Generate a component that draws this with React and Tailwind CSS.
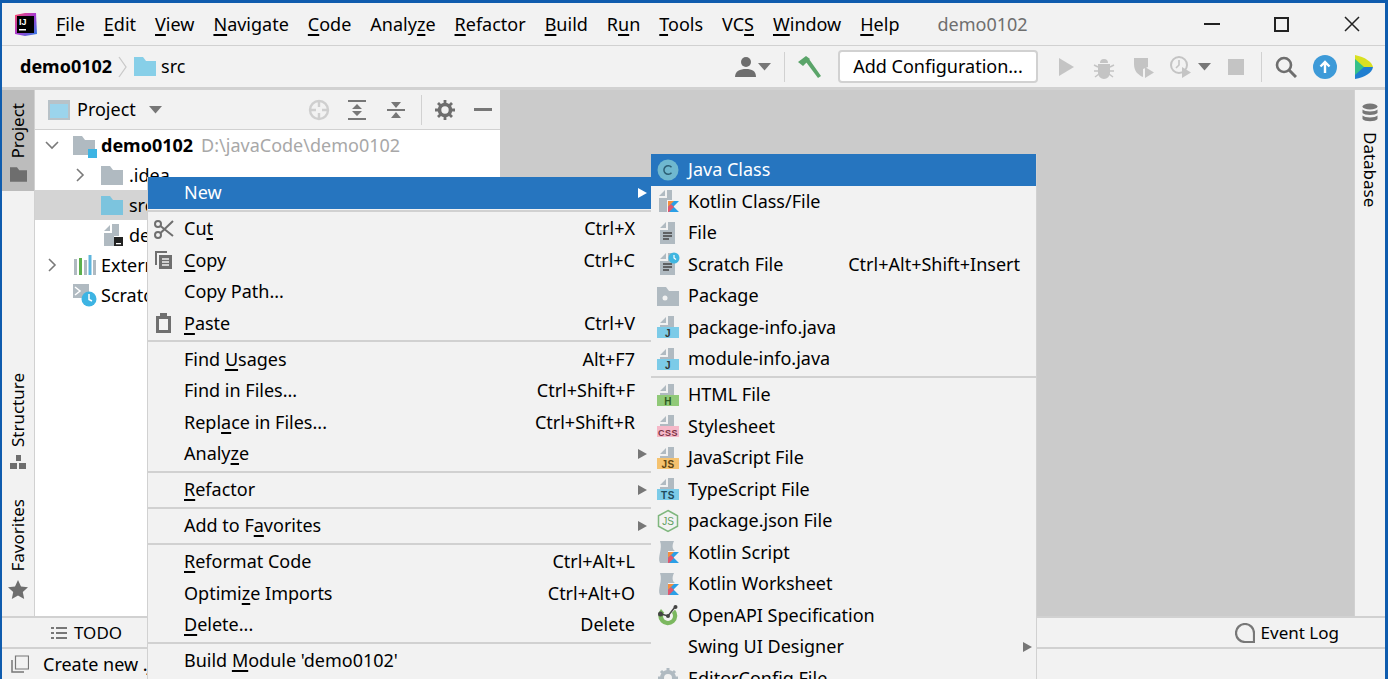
const gray = '#b0bac1';

function U({ children }) {
  return <span className="underline decoration-[1.5px] underline-offset-[3px]">{children}</span>;
}

function Svg({ w = 20, h = 20, vb, className = '', children }) {
  return (
    <svg width={w} height={h} viewBox={vb || `0 0 ${w} ${h}`} className={`shrink-0 ${className}`} aria-hidden="true">
      {children}
    </svg>
  );
}

function Folder({ color = gray, w = 22, h = 19 }) {
  return (
    <Svg w={w} h={h} vb="0 0 22 19">
      <path d="M0 0h9l3 4h10v15H0z" fill={color} />
    </Svg>
  );
}

function Chevron({ open }) {
  return (
    <Svg w={14} h={14}>
      <path d={open ? 'M1 4l6 6 6-6' : 'M4 1l6 6-6 6'} fill="none" stroke="#7a7a7a" strokeWidth="1.6" />
    </Svg>
  );
}

function Caret({ className = '' }) {
  return (
    <Svg w={13} h={8} className={className}>
      <path d="M0 0h13L6.5 7.5z" fill="#777" />
    </Svg>
  );
}

function PageBadge({ color, label, fg = '#333' }) {
  return (
    <Svg w={24} h={24}>
      <path d="M4 8l6-6v6zM12 1h6v11H4v-2h8z" fill={gray} />
      <rect x="1" y="12" width="22" height="11" fill={color} />
      <text x="12" y="21.5" textAnchor="middle" fontSize={label.length > 2 ? 9 : 10} fontWeight="700" letterSpacing="0.5" fontFamily="Liberation Sans, sans-serif" fill={fg}>
        {label}
      </text>
    </Svg>
  );
}

function KotlinMark() {
  return (
    <g>
      <path d="M12 23V12h11L17.5 17.5 23 23z" fill="#2b9fe6" />
      <path d="M12 12h6l-6 6z" fill="#f68d3d" />
      <path d="M12 18l3-3 3 3-5 5h-1z" fill="#e2566d" />
    </g>
  );
}

const icons = {
  cut: (
    <Svg w={22} h={22}>
      <g fill="none" stroke="#6f6f6f" strokeWidth="2">
        <circle cx="5" cy="6" r="3" />
        <circle cx="5" cy="17" r="3" />
        <path d="M7.5 8L20 18M7.5 15L20 3" />
      </g>
    </Svg>
  ),
  copy: (
    <Svg w={20} h={22}>
      <path d="M1 2h12v2H3v12H1z" fill="#6f6f6f" />
      <path d="M5 6h13v14H5z" fill="#6f6f6f" />
      <path d="M8 10h7M8 13h7M8 16h7" stroke="#f2f2f2" strokeWidth="1.4" />
    </Svg>
  ),
  paste: (
    <Svg w={18} h={22}>
      <path d="M1 4h4V1h7v3h4v17H1z" fill="#6f6f6f" />
      <path d="M4 7h9v11H4z" fill="#f2f2f2" />
    </Svg>
  ),
  javaClass: (
    <Svg w={22} h={22}>
      <circle cx="11" cy="11" r="10.5" fill="#6fb8cf" />
      <path d="M14.5 8.2a4.3 4.3 0 1 0 0 5.6" fill="none" stroke="#2d5f74" strokeWidth="1.5" />
    </Svg>
  ),
  kotlinFile: (
    <Svg w={24} h={24}>
      <path d="M3 7l6-6v6zM11 1h5v10h-5v12H3V9h8z" fill={gray} />
      <KotlinMark />
    </Svg>
  ),
  file: (
    <Svg w={24} h={24}>
      <path d="M4 7l6-6v6zM12 1h7v22H4V9h8z" fill={gray} />
      <path d="M7 12h9M7 15h9M7 18h6" stroke="#444" strokeWidth="1.3" />
    </Svg>
  ),
  scratch: (
    <Svg w={24} h={24}>
      <path d="M4 7l6-6v6zM12 1h7v22H4V9h8z" fill={gray} />
      <path d="M7 12h9M7 15h9M7 18h6" stroke="#444" strokeWidth="1.3" />
      <circle cx="18" cy="6" r="5.5" fill="#40b6e0" />
      <path d="M18 3v3l2 1.5" fill="none" stroke="#fff" strokeWidth="1.2" />
    </Svg>
  ),
  pkg: (
    <Svg w={24} h={20}>
      <path d="M1 1h9l3 4h10v15H1z" fill={gray} />
      <circle cx="9" cy="12" r="2.5" fill="#f2f2f2" />
    </Svg>
  ),
  node: (
    <Svg w={24} h={24}>
      <path d="M12 1.5l9.5 5.3v10.4L12 22.5l-9.5-5.3V6.8z" fill="none" stroke="#7fb77e" strokeWidth="1.5" />
      <text x="12" y="16" textAnchor="middle" fontSize="10" fontFamily="Liberation Sans, sans-serif" fill="#5f9e5e">JS</text>
    </Svg>
  ),
  kotlinScript: (
    <Svg w={24} h={24}>
      <path d="M4 1h14c-2 4-2 8 1 10h-7v12H4c-3-6 3-14 0-22z" fill={gray} />
      <KotlinMark />
    </Svg>
  ),
  openApi: (
    <Svg w={22} h={22}>
      <path d="M4 5a9.5 9.5 0 1 0 14 .5L11 13z" fill="#7cb860" />
      <circle cx="11" cy="12" r="5" fill="#f2f2f2" />
      <path d="M4 10l7 2 7-9" fill="none" stroke="#444" strokeWidth="1.5" />
      <circle cx="3.5" cy="10" r="2.5" fill="#444" />
      <circle cx="11" cy="12" r="2" fill="#444" />
      <circle cx="18.5" cy="3" r="2" fill="#444" />
    </Svg>
  ),
  gear: (
    <Svg w={22} h={22}>
      <circle cx="11" cy="11" r="6" fill="none" stroke={gray} strokeWidth="4" />
      <path d="M11 1v4M11 17v4M1 11h4M17 11h4M4 4l3 3M15 15l3 3M18 4l-3 3M7 15l-3 3" stroke={gray} strokeWidth="3" />
    </Svg>
  ),
};

function Badge(label, color, fg) {
  return <PageBadge label={label} color={color} fg={fg} />;
}

const mainMenu = [
  { label: 'New', arrow: true, active: true },
  'sep',
  { label: <>Cu<U>t</U></>, keys: 'Ctrl+X', icon: icons.cut },
  { label: <><U>C</U>opy</>, keys: 'Ctrl+C', icon: icons.copy },
  { label: 'Copy Path...' },
  { label: <><U>P</U>aste</>, keys: 'Ctrl+V', icon: icons.paste },
  'sep',
  { label: <>Find <U>U</U>sages</>, keys: 'Alt+F7' },
  { label: 'Find in Files...', keys: 'Ctrl+Shift+F' },
  { label: <>Repl<U>a</U>ce in Files...</>, keys: 'Ctrl+Shift+R' },
  { label: <>Analy<U>z</U>e</>, arrow: true },
  'sep',
  { label: <><U>R</U>efactor</>, arrow: true },
  'sep',
  { label: <>Add to F<U>a</U>vorites</>, arrow: true },
  'sep',
  { label: <><U>R</U>eformat Code</>, keys: 'Ctrl+Alt+L' },
  { label: <>Optimi<U>z</U>e Imports</>, keys: 'Ctrl+Alt+O' },
  { label: <><U>D</U>elete...</>, keys: 'Delete' },
  'sep',
  { label: <>Build <U>M</U>odule 'demo0102'</> },
];

const newMenu = [
  { label: 'Java Class', active: true, icon: icons.javaClass },
  { label: 'Kotlin Class/File', icon: icons.kotlinFile },
  { label: 'File', icon: icons.file },
  { label: 'Scratch File', keys: 'Ctrl+Alt+Shift+Insert', icon: icons.scratch },
  { label: 'Package', icon: icons.pkg },
  { label: 'package-info.java', icon: Badge('J', '#7ccbe8') },
  { label: 'module-info.java', icon: Badge('J', '#7ccbe8') },
  'sep',
  { label: 'HTML File', icon: Badge('H', '#90c978', '#2f5d22') },
  { label: 'Stylesheet', icon: Badge('CSS', '#f5b8c8', '#7a3344') },
  { label: 'JavaScript File', icon: Badge('JS', '#f5c26f', '#5d4413') },
  { label: 'TypeScript File', icon: Badge('TS', '#7ccbe8', '#1f4a5c') },
  { label: 'package.json File', icon: icons.node },
  { label: 'Kotlin Script', icon: icons.kotlinScript },
  { label: 'Kotlin Worksheet', icon: icons.kotlinScript },
  { label: 'OpenAPI Specification', icon: icons.openApi },
  { label: 'Swing UI Designer', arrow: true },
  { label: 'EditorConfig File', icon: icons.gear },
];

function MenuRow({ item, iconLeft, textLeft }) {
  return (
    <div className={`relative flex h-[31.5px] shrink-0 items-center whitespace-nowrap ${item.active ? 'bg-[#2675bf] text-white' : ''}`}>
      {item.icon ? (
        <span className={`absolute top-1/2 flex w-[24px] -translate-y-1/2 justify-center ${iconLeft}`}>{item.icon}</span>
      ) : null}
      <span className={textLeft}>{item.label}</span>
      {item.keys ? <span className="ml-auto mr-[16px]">{item.keys}</span> : null}
      {item.arrow ? (
        <span className={`absolute right-[4px] h-0 w-0 border-y-[5px] border-l-[9px] border-y-transparent ${item.active ? 'border-l-white' : 'border-l-[#777]'}`} />
      ) : null}
    </div>
  );
}

function Menu({ items, className, iconLeft, textLeft }) {
  return (
    <div className={`absolute flex flex-col overflow-hidden bg-[#f2f2f2] text-black ${className}`}>
      {items.map((item, i) =>
        item === 'sep' ? (
          <div key={i} className="flex h-[4.5px] shrink-0 items-center">
            <div className="h-[2px] w-full bg-[#d1d1d1]" />
          </div>
        ) : (
          <MenuRow key={i} item={item} iconLeft={iconLeft} textLeft={textLeft} />
        ),
      )}
    </div>
  );
}

function TreeRow({ indent, chevron, icon, selected, children }) {
  return (
    <div className={`flex h-[30px] items-center whitespace-nowrap ${selected ? 'bg-[#d4d4d4]' : ''}`} style={{ paddingLeft: indent }}>
      <span className="w-[28px] shrink-0">{chevron}</span>
      <span className="flex w-[28px] shrink-0 justify-start">{icon}</span>
      {children}
    </div>
  );
}

function StripeTab({ children, icon, active }) {
  return (
    <div className={`flex flex-col items-center ${active ? 'bg-[#bcbcbc] pt-[13px] pb-[9px]' : ''}`}>
      <span className="text-[17px] leading-[32px] [writing-mode:vertical-rl] rotate-180">{children}</span>
      <span className="mt-[8px] flex">{icon}</span>
    </div>
  );
}

export default function App() {
  const menus = [
    <><U>F</U>ile</>, <><U>E</U>dit</>, <><U>V</U>iew</>, <><U>N</U>avigate</>, <><U>C</U>ode</>, <>Analy<U>z</U>e</>,
    <><U>R</U>efactor</>, <><U>B</U>uild</>, <>R<U>u</U>n</>, <><U>T</U>ools</>, <>VC<U>S</U></>, <><U>W</U>indow</>, <><U>H</U>elp</>,
  ];

  return (
    <div className="relative flex h-[679px] w-[1388px] flex-col overflow-hidden bg-[#0f5cae] pt-[3px] pl-[2px] pr-[3px] font-['Noto_Sans',sans-serif] text-[18px] text-black">
      {/* title bar */}
      <div className="flex h-[43px] shrink-0 items-center border-b border-[#d1d1d1] bg-[#f2f2f2] pl-[11px]">
        <div className="relative h-[24px] w-[24px] shrink-0">
          <Svg w={24} h={24} className="absolute inset-0">
            <defs>
              <linearGradient id="ij" x1="0" y1="0" x2="1" y2="1">
                <stop offset="0" stopColor="#fc4a6a" />
                <stop offset="0.5" stopColor="#a63bd1" />
                <stop offset="1" stopColor="#2b7fe6" />
              </linearGradient>
            </defs>
            <path d="M2 3l10-2 11 0 1 21-12 2-10-2z" fill="url(#ij)" />
            <rect x="4" y="4" width="17" height="17" fill="#000" />
            <rect x="6" y="17" width="7" height="1.5" fill="#fff" />
          </Svg>
          <span className="absolute left-[6px] top-[5px] font-['Liberation_Sans',sans-serif] text-[9px] font-bold leading-[10px] text-white">IJ</span>
        </div>
        <nav className="ml-[19px] flex gap-[19px] whitespace-nowrap">
          {menus.map((m, i) => (
            <span key={i}>{m}</span>
          ))}
        </nav>
        <span className="ml-[38px] text-[#6e6e6e]">demo0102</span>
        <div className="ml-auto flex items-center">
          <span className="h-[2px] w-[16px] bg-[#222]" />
          <span className="ml-[54px] h-[15px] w-[15px] border-2 border-[#222]" />
          <Svg w={16} h={16} className="ml-[55px] mr-[25px]">
            <path d="M1 1l14 14M15 1L1 15" stroke="#222" strokeWidth="1.5" />
          </Svg>
        </div>
      </div>

      {/* navigation bar */}
      <div className="flex h-[44px] shrink-0 items-center border-b-[3px] border-[#d1d1d1] bg-[#f2f2f2] pl-[18px]">
        <span className="font-bold">demo0102</span>
        <Svg w={10} h={24} className="ml-[6px]">
          <path d="M1 2l7 10-7 10" fill="none" stroke="#c9c9c9" strokeWidth="1.3" />
        </Svg>
        <span className="ml-[6px] flex">
          <Folder color="#87cfe8" />
        </span>
        <span className="ml-[5px]">src</span>
        <div className="ml-auto flex items-center">
          <Svg w={22} h={22}>
            <circle cx="12" cy="6" r="5" fill="#6e6e6e" />
            <path d="M1 21c0-6 5-8 11-8s10 2 10 8z" fill="#6e6e6e" />
          </Svg>
          <Caret className="ml-[2px]" />
          <span className="ml-[13px] h-[30px] w-px bg-[#d1d1d1]" />
          <Svg w={26} h={24} className="ml-[12px]">
            <path d="M1 7l8-6 4 3-7 7zM9 7l3-3 12 17-3 2z" fill="#5aa469" />
          </Svg>
          <button className="ml-[15px] flex h-[33px] w-[200px] items-center justify-center rounded-[4px] border-2 border-[#d1d1d1] bg-white">
            Add Configuration...
          </button>
          <Svg w={18} h={20} className="ml-[20px]">
            <path d="M1 1l15 9-15 9z" fill="#c4c4c4" />
          </Svg>
          <Svg w={22} h={24} className="ml-[17px]">
            <path d="M5 9h12v9a6 6 0 0 1-12 0zM7 8a4 4 0 0 1 8 0z" fill="#c4c4c4" />
            <path d="M1 10l4 2M21 10l-4 2M1 16h4M21 16h-4M2 22l4-3M20 22l-4-3" stroke="#c4c4c4" strokeWidth="1.5" />
          </Svg>
          <Svg w={24} h={24} className="ml-[17px]">
            <path d="M2 3h14v9l-5 2v8C6 20 2 16 2 9z" fill="#c4c4c4" />
            <path d="M13 12l9 5.5-9 5.5z" fill="#c4c4c4" />
          </Svg>
          <Svg w={24} h={24} className="ml-[13px]">
            <circle cx="10" cy="10" r="8" fill="none" stroke="#c4c4c4" strokeWidth="2" />
            <path d="M10 5v5l-3 3" fill="none" stroke="#c4c4c4" strokeWidth="1.6" />
            <path d="M13 12l9 5.5-9 5.5z" fill="#c4c4c4" />
          </Svg>
          <Caret className="ml-[5px]" />
          <span className="ml-[17px] h-[16px] w-[16px] bg-[#c4c4c4]" />
          <span className="ml-[17px] h-[30px] w-px bg-[#d1d1d1]" />
          <Svg w={22} h={22} className="ml-[13px]">
            <circle cx="9" cy="9" r="7" fill="none" stroke="#6e6e6e" strokeWidth="2.6" />
            <path d="M14 14l7 7" stroke="#6e6e6e" strokeWidth="3" />
          </Svg>
          <Svg w={24} h={24} className="ml-[16px]">
            <circle cx="12" cy="12" r="12" fill="#3d9ad8" />
            <path d="M12 18V8M7.5 11.5L12 7l4.5 4.5" fill="none" stroke="#fff" strokeWidth="2.4" />
          </Svg>
          <Svg w={20} h={26} className="ml-[17px] mr-[11px]">
            <path d="M1 1c10 2 17 7 18 12L1 13z" fill="#d9e021" />
            <path d="M1 13h18c-1 6-8 10-18 12z" fill="#1f7ed0" />
            <path d="M1 5l9 8-9 8z" fill="#35c08a" />
          </Svg>
        </div>
      </div>

      {/* main area */}
      <div className="flex min-h-0 flex-1">
        <div className="flex w-[33px] shrink-0 flex-col justify-between border-r border-[#d1d1d1] bg-[#f2f2f2]">
          <StripeTab active icon={<Folder color="#6e6e6e" w={17} h={15} />}>Project</StripeTab>
          <div className="flex flex-col gap-[30px] pb-[17px]">
            <StripeTab
              icon={
                <Svg w={16} h={14}>
                  <path d="M6 0h5v6H6zM0 8h7v6H0zM9 8h7v6H9z" fill="#6e6e6e" />
                </Svg>
              }
            >
              Structure
            </StripeTab>
            <StripeTab
              icon={
                <Svg w={20} h={19}>
                  <path d="M10 0l3 6.5 7 .8-5.2 4.7 1.4 7L10 15.500l-6.200 3.500 1.400-7L0 7.300l7-.8z" fill="#6e6e6e" />
                </Svg>
              }
            >
              Favorites
            </StripeTab>
          </div>
        </div>

        <div className="flex w-[465px] shrink-0 flex-col bg-white">
          <div className="flex h-[40px] shrink-0 items-center border-b border-[#d1d1d1] bg-[#f2f2f2] pl-[13px]">
            <span className="h-[20px] w-[22px] border-2 border-[#b8c2c8] border-t-[4px] bg-[#9bd4ec]" />
            <span className="ml-[7px]">Project</span>
            <Caret className="ml-[13px]" />
            <div className="ml-auto flex items-center pr-[8px]">
              <Svg w={22} h={22}>
                <circle cx="11" cy="11" r="9" fill="none" stroke="#cfcfcf" strokeWidth="2.4" />
                <path d="M11 2v6M11 14v6M2 11h6M14 11h6" stroke="#cfcfcf" strokeWidth="2.4" />
              </Svg>
              <Svg w={20} h={22} className="ml-[17px]">
                <path d="M1 1h18v2H1zM1 19h18v2H1zM10 5l5 5H5zM10 17l-5-5h10z" fill="#777" />
              </Svg>
              <Svg w={20} h={22} className="ml-[19px]">
                <path d="M1 10h18v2H1zM10 9L5 3h10zM10 13l5 6H5z" fill="#777" />
              </Svg>
              <span className="ml-[15px] h-[30px] w-px bg-[#d1d1d1]" />
              <span className="ml-[13px] flex">
                <Svg w={20} h={20}>
                  <circle cx="10" cy="10" r="5.500" fill="none" stroke="#6e6e6e" strokeWidth="3.600" />
                  <path d="M10 0v4M10 16v4M0 10h4M16 10h4M3 3l3 3M14 14l3 3M17 3l-3 3M6 14l-3 3" stroke="#6e6e6e" strokeWidth="2.800" />
                </Svg>
              </span>
              <span className="ml-[19px] h-[3px] w-[18px] bg-[#777]" />
            </div>
          </div>
          <TreeRow
            indent={10}
            chevron={<Chevron open />}
            icon={
              <span className="relative flex">
                <Folder />
                <span className="absolute -bottom-[3px] -right-[2px] h-[9px] w-[9px] bg-[#3db4e3]" />
              </span>
            }
          >
            <span className="font-bold">demo0102</span>
            <span className="ml-[8px] text-[#a8a8a8]">D:\javaCode\demo0102</span>
          </TreeRow>
          <TreeRow indent={38} chevron={<Chevron />} icon={<Folder />}>.idea</TreeRow>
          <TreeRow indent={38} selected icon={<Folder color="#7cc4de" />}>src</TreeRow>
          <TreeRow
            indent={38}
            icon={
              <Svg w={24} h={24}>
                <path d="M3 8l6-6v6zM11 1h7v12h-5v10H3V10h8z" fill={gray} />
                <rect x="13" y="14" width="9" height="9" fill="#222" />
                <rect x="15" y="20" width="5" height="1.300" fill="#fff" />
              </Svg>
            }
          >
            demo0102.iml
          </TreeRow>
          <TreeRow
            indent={10}
            chevron={<Chevron />}
            icon={
              <Svg w={23} h={22}>
                <path d="M1 5h3v16H1z" fill={gray} />
                <path d="M6 4h3v17H6z" fill="#5cb04d" />
                <path d="M11 6h3v15h-3zM20 6h3v15h-3z" fill={gray} />
                <path d="M15.500 1h3v20h-3z" fill="#5eb5dd" />
              </Svg>
            }
          >
            External Libraries
          </TreeRow>
          <TreeRow
            indent={10}
            icon={
              <Svg w={24} h={24}>
                <path d="M0 1h16v14H0z" fill={gray} />
                <path d="M2 4l5 4-5 4" fill="none" stroke="#fff" strokeWidth="1.500" />
                <circle cx="16" cy="16" r="7.500" fill="#3db4e3" />
                <path d="M16 11v5.500l3 1.500" fill="none" stroke="#fff" strokeWidth="1.500" />
              </Svg>
            }
          >
            Scratches and Consoles
          </TreeRow>
        </div>

        <div className="flex-1 bg-[#cbcbcb]" />

        <div className="flex w-[31px] shrink-0 flex-col items-center border-l border-[#d1d1d1] bg-[#f2f2f2] pt-[13px]">
          <Svg w={16} h={20}>
            <ellipse cx="8" cy="3.500" rx="7.500" ry="3" fill="#777" />
            <path d="M.5 6.500c2 2.500 13 2.500 15 0v3.500c-2 2.500-13 2.500-15 0zM.5 12.500c2 2.500 13 2.500 15 0V16c-2 3-13 3-15 0z" fill="#777" />
          </Svg>
          <span className="mt-[9px] text-[17px] leading-[30px] [writing-mode:vertical-rl]">Database</span>
        </div>
      </div>

      {/* tool window bar */}
      <div className="flex h-[33px] shrink-0 items-center border-y-2 border-[#d1d1d1] bg-[#f2f2f2] pl-[49px] text-[17px]">
        <Svg w={16} h={14}>
          <path d="M0 1h3v2H0zM5 1h11v2H5zM0 6h3v2H0zM5 6h11v2H5zM0 11h3v2H0zM5 11h11v2H5z" fill="#777" />
        </Svg>
        <span className="ml-[7px]">TODO</span>
        <div className="ml-auto flex items-center pr-[46px]">
          <Svg w={20} h={20}>
            <path d="M19 19H10a9 9 0 1 1 9-9z" fill="none" stroke="#777" strokeWidth="2.200" />
          </Svg>
          <span className="ml-[6px]">Event Log</span>
        </div>
      </div>

      {/* status bar */}
      <div className="flex h-[30px] shrink-0 items-center bg-[#f2f2f2] pl-[9px]">
        <Svg w={18} h={18}>
          <path d="M4.500 1h13v13h-13z" fill="none" stroke="#777" strokeWidth="1.200" />
          <path d="M1 5v12h12" fill="none" stroke="#777" strokeWidth="1.500" />
        </Svg>
        <span className="ml-[14px] whitespace-nowrap">Create new .java file</span>
      </div>

      {/* context menus */}
      <Menu
        items={mainMenu}
        className="left-[147px] top-[177px] h-[502px] w-[504px] border-l border-[#d1d1d1]"
        iconLeft="left-[4px]"
        textLeft="ml-[36px]"
      />
      <Menu
        items={newMenu}
        className="left-[651px] top-[154px] h-[525px] w-[386px] border-r border-[#d1d1d1]"
        iconLeft="left-[5px]"
        textLeft="ml-[37px]"
      />
    </div>
  );
}
